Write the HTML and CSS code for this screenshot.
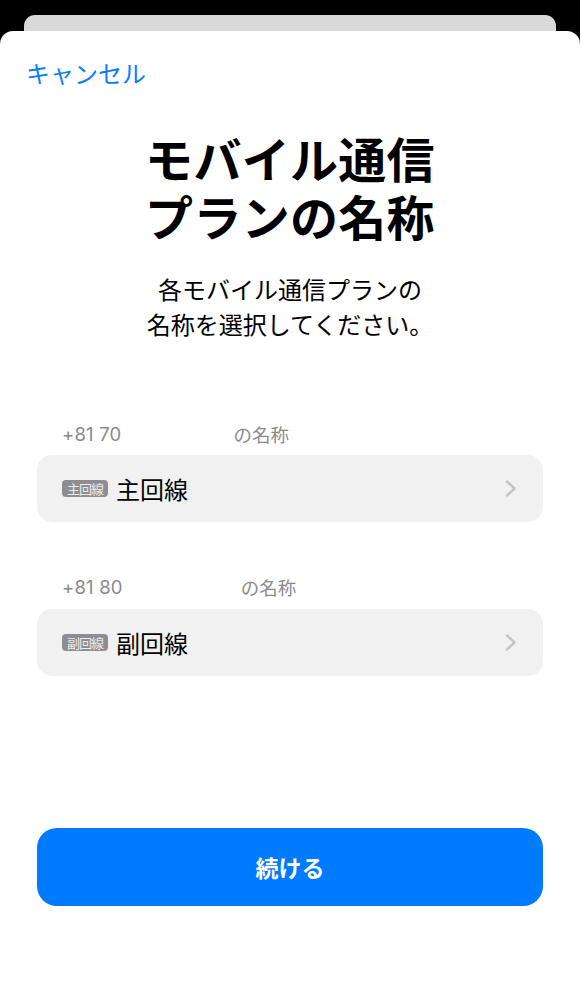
FILE: index.html
```html
<!DOCTYPE html>
<html lang="ja">
<head>
<meta charset="utf-8">
<title>モバイル通信プランの名称</title>
<link rel="stylesheet" href="styles.css">
</head>
<body>
<div class="screen">
  <div class="back-sheet"></div>
  <div class="sheet">
    <div class="nav"><span class="cancel">キャンセル</span></div>
    <h1 class="title"><span class="title-line">モバイル通信</span><span class="title-line">プランの名称</span></h1>
    <p class="subtitle">各モバイル通信プランの<br>名称を選択してください。</p>

    <div class="section first">
      <div class="label"><span class="num">+81 70</span><span class="redact r1"></span><span>の名称</span></div>
      <div class="row">
        <span class="badge">主回線</span>
        <span class="row-text">主回線</span>
        <svg class="chev" width="12" height="17" viewBox="0 0 12 17"><path d="M2 1.5 L9.5 8.5 L2 15.5" fill="none" stroke="#c4c4c7" stroke-width="2.4" stroke-linecap="round" stroke-linejoin="round"/></svg>
      </div>
    </div>

    <div class="section second">
      <div class="label"><span class="num">+81 80</span><span class="redact r2"></span><span>の名称</span></div>
      <div class="row">
        <span class="badge">副回線</span>
        <span class="row-text">副回線</span>
        <svg class="chev" width="12" height="17" viewBox="0 0 12 17"><path d="M2 1.5 L9.5 8.5 L2 15.5" fill="none" stroke="#c4c4c7" stroke-width="2.4" stroke-linecap="round" stroke-linejoin="round"/></svg>
      </div>
    </div>

    <div class="footer">
      <button class="continue">続ける</button>
    </div>
  </div>
</div>
</body>
</html>
```

FILE: styles.css
```css
html, body {
  margin: 0;
  padding: 0;
  background: #000;
}
body {
  font-family: "Inter", "Noto Sans CJK JP", sans-serif;
  color: #000;
}
.screen {
  width: 580px;
  height: 1000px;
  overflow: hidden;
  padding-top: 15px;
  box-sizing: border-box;
  display: flex;
  flex-direction: column;
}
.back-sheet {
  margin: 0 24px;
  height: 16px;
  flex: none;
  background: #d9d9d9;
  border-radius: 11px 11px 0 0;
}
.sheet {
  flex: 1;
  background: #fff;
  border-radius: 13px 13px 0 0;
  display: flex;
  flex-direction: column;
}
.nav {
  padding: 27px 0 0 26px;
  height: 30px;
}
.cancel {
  font-family: "Noto Sans CJK JP", sans-serif;
  font-size: 24px;
  line-height: 30px;
  color: #0a7dfa;
}
.title {
  margin: 40px 0 0;
  text-align: center;
  font-family: "Noto Sans CJK JP", sans-serif;
  font-weight: 700;
  font-size: 48px;
  line-height: 58px;
  letter-spacing: 0.3px;
  display: flex;
  flex-direction: column;
  align-items: center;
}
.title-line {
  display: block;
  height: 58px;
  line-height: 58px;
}
.subtitle {
  margin: 27px 0 0;
  text-align: center;
  font-family: "Noto Sans CJK JP", sans-serif;
  font-size: 24px;
  line-height: 35px;
}
.section {
  padding: 0 37px;
}
.section.first {
  margin-top: 81px;
}
.section.second {
  margin-top: 53px;
}
.label {
  display: flex;
  align-items: center;
  padding-left: 25px;
  height: 24px;
  margin-bottom: 9px;
  font-family: "Noto Sans CJK JP", sans-serif;
  font-size: 18.5px;
  color: #8a8a8e;
}
.label .num {
  font-family: "Inter", sans-serif;
  font-size: 18.5px;
  letter-spacing: 0.2px;
}
.redact {
  display: inline-block;
}
.redact.r1 { width: 112px; }
.redact.r2 { width: 118px; }
.section.second .label {
  margin-bottom: 10px;
}
.row {
  height: 67px;
  background: #f1f1f2;
  border-radius: 15px;
  display: flex;
  align-items: center;
  padding: 0 26px 0 25px;
}
.badge {
  flex: none;
  width: 46px;
  height: 17px;
  border-radius: 4px;
  background: #8e8e92;
  color: #ececed;
  font-family: "Noto Sans CJK JP", sans-serif;
  font-size: 13px;
  line-height: 17px;
  text-align: center;
  letter-spacing: -1px;
}
.row-text {
  margin-left: 8px;
  font-family: "Noto Sans CJK JP", sans-serif;
  font-size: 24px;
  line-height: 30px;
  flex: 1;
}
.chev {
  flex: none;
  display: block;
}
.footer {
  padding: 0 37px;
  margin-top: 152px;
}
.continue {
  display: block;
  width: 100%;
  height: 78px;
  border: none;
  border-radius: 20px;
  background: #007aff;
  color: #fff;
  font-family: "Noto Sans CJK JP", sans-serif;
  font-weight: 700;
  font-size: 23px;
  padding: 0;
}
```
